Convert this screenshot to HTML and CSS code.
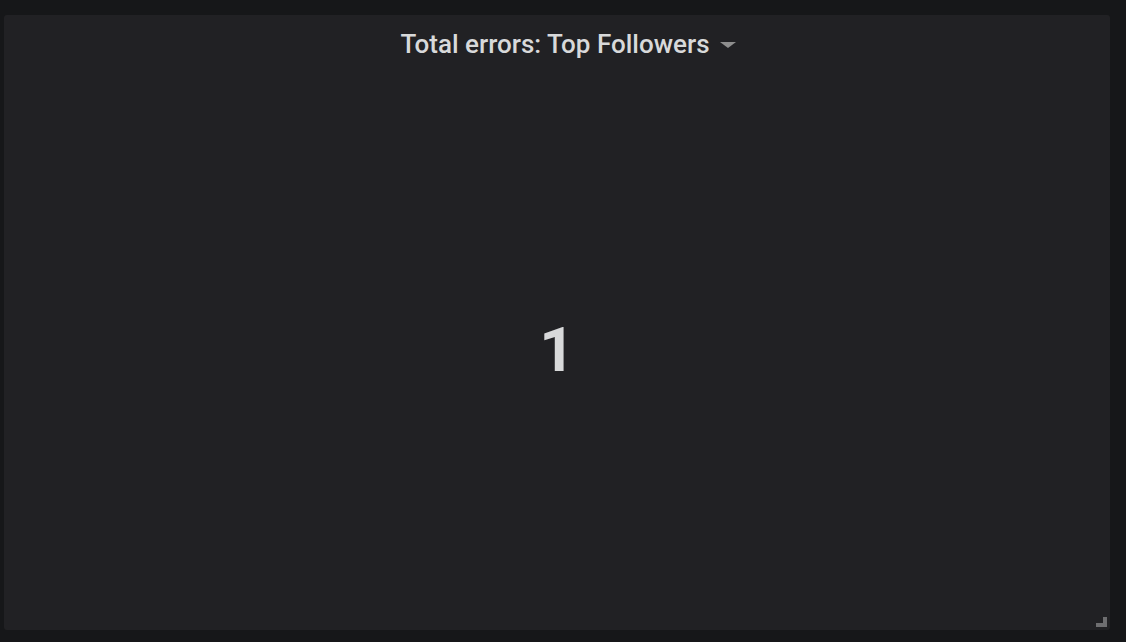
FILE: index.html
```html
<!DOCTYPE html>
<html>
<head>
<meta charset="utf-8">
<link rel="stylesheet" href="styles.css">
</head>
<body>
<div class="panel">
  <div class="panel-header">
    <span class="panel-title">Total errors: Top Followers</span>
    <span class="caret"></span>
  </div>
  <div class="panel-body">
    <span class="stat-value">1</span>
  </div>
  <span class="resize-handle"></span>
</div>
</body>
</html>
```
FILE: styles.css
```css
html, body {
  margin: 0;
  height: 100%;
  background: #161719;
}
body {
  box-sizing: border-box;
  padding: 15px 16px 12px 4px;
  display: flex;
  font-family: Roboto, "Noto Sans", sans-serif;
}
.panel {
  position: relative;
  flex: 1;
  background: #212124;
  border-radius: 3px;
  display: flex;
  flex-direction: column;
}
.panel-header {
  display: flex;
  justify-content: center;
  align-items: center;
  gap: 10px;
  padding-top: 14px;
  padding-left: 22px;
  height: 30px;
}
.panel-title {
  color: #d8d9da;
  font-size: 26px;
  font-weight: 500;
  line-height: 30px;
}
.caret {
  width: 0;
  height: 0;
  border-left: 8px solid transparent;
  border-right: 8px solid transparent;
  border-top: 6px solid #8e8e8e;
  margin-top: 2px;
}
.panel-body {
  flex: 1;
  display: flex;
  align-items: center;
  justify-content: center;
  padding-top: 10px;
}
.stat-value {
  color: #d8d9da;
  font-size: 62px;
  font-weight: 700;
}
.resize-handle {
  position: absolute;
  right: 3px;
  bottom: 3px;
  width: 11px;
  height: 10px;
  border-right: 4px solid #6e6e70;
  border-bottom: 4px solid #6e6e70;
  box-sizing: border-box;
}
```
